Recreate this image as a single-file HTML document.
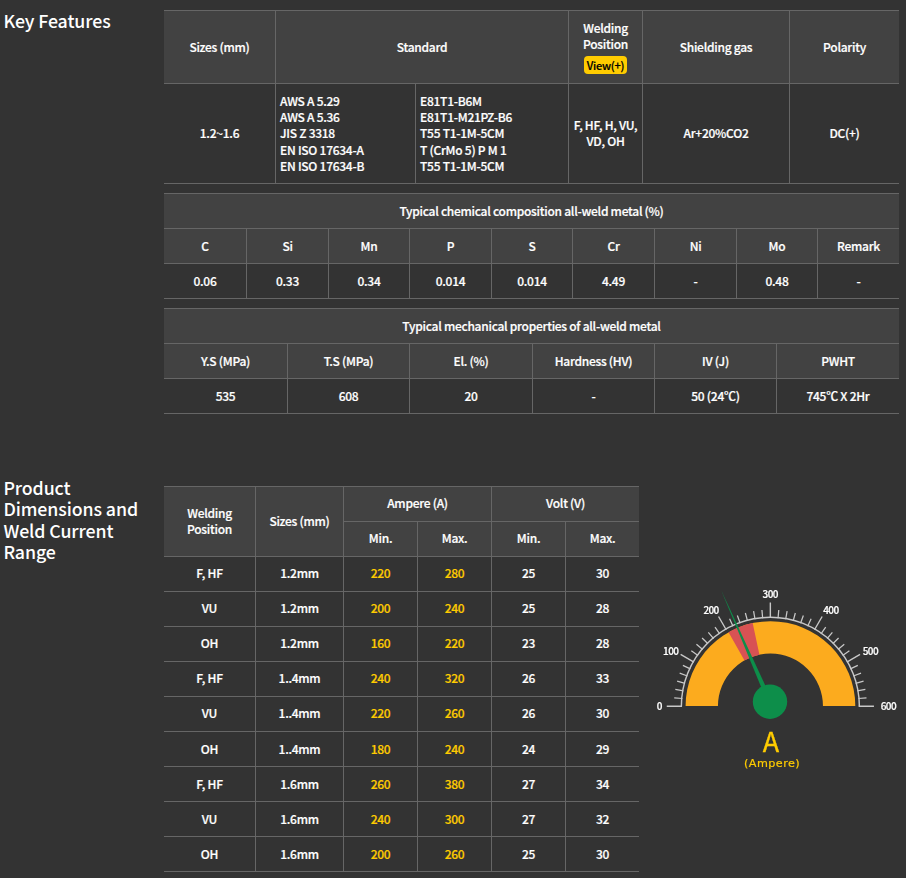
<!DOCTYPE html>
<html lang="en">
<head>
<meta charset="utf-8">
<title>Key Features</title>
<style>
*{box-sizing:border-box;margin:0;padding:0}
html,body{width:906px;height:878px;background:#333;overflow:hidden}
body{position:relative;font-family:"Noto Sans CJK KR","Liberation Sans",sans-serif;color:#fff;font-size:12px;font-weight:500;letter-spacing:-0.27px;line-height:16px;-webkit-text-stroke:0.2px}
h2{position:absolute;left:3.4px;font-size:17.76px;font-weight:500;line-height:21.31px;letter-spacing:-0.1px;width:150px;-webkit-text-stroke:0}
table{position:absolute;left:164px;border-collapse:separate;border-spacing:0;table-layout:fixed;border-top:1px solid #666}
th,td{border-right:1px solid #666;border-bottom:1px solid #666;text-align:center;vertical-align:middle;font-weight:500;padding:0;overflow:hidden}
th{background:#424242}
tr>*:last-child{border-right:none}
#t1{top:10px;width:735px}
#t1 th{height:73px}
#t1 td{height:100px;padding-bottom:2px}
#t1 td.l{text-align:left;padding-left:4px;padding-bottom:0;line-height:16.2px}
.btn{display:block;width:43px;height:18px;margin:4px auto 0;background:#fc0;color:#000;border-radius:4px;font-size:11px;line-height:19px;letter-spacing:-0.25px}
#t2{top:193px;width:735px}
#t3{top:308px;width:735px}
#t2 th,#t2 td,#t3 th,#t3 td,#t4 th,#t4 td{height:35px}
#t4{top:486px;width:475px}
#t4 .y{color:#fc0}
#t4 th,#t4 td{padding-bottom:2px}
#t4 tr:nth-child(n+8) td{padding-bottom:0}
</style>
</head>
<body>
<h2 style="top:10px">Key Features</h2>
<table id="t1">
<colgroup><col style="width:112px"><col style="width:140px"><col style="width:153px"><col style="width:74px"><col style="width:147px"><col style="width:109px"></colgroup>
<tr><th>Sizes (mm)</th><th colspan="2">Standard</th><th>Welding<br>Position<span class="btn">View(+)</span></th><th>Shielding gas</th><th>Polarity</th></tr>
<tr><td>1.2~1.6</td><td class="l">AWS A 5.29<br>AWS A 5.36<br>JIS Z 3318<br>EN ISO 17634-A<br>EN ISO 17634-B</td><td class="l">E81T1-B6M<br>E81T1-M21PZ-B6<br>T55 T1-1M-5CM<br>T (CrMo 5) P M 1<br>T55 T1-1M-5CM</td><td>F, HF, H, VU,<br>VD, OH</td><td>Ar+20%CO2</td><td>DC(+)</td></tr>
</table>

<table id="t2">
<colgroup><col style="width:83px"><col style="width:82px"><col style="width:81px"><col style="width:82px"><col style="width:81px"><col style="width:82px"><col style="width:82px"><col style="width:81px"><col style="width:81px"></colgroup>
<tr><th colspan="9">Typical chemical composition all-weld metal (%)</th></tr>
<tr><th>C</th><th>Si</th><th>Mn</th><th>P</th><th>S</th><th>Cr</th><th>Ni</th><th>Mo</th><th>Remark</th></tr>
<tr><td>0.06</td><td>0.33</td><td>0.34</td><td>0.014</td><td>0.014</td><td>4.49</td><td>-</td><td>0.48</td><td>-</td></tr>
</table>

<table id="t3">
<colgroup><col style="width:124px"><col style="width:122px"><col style="width:123px"><col style="width:122px"><col style="width:122px"><col style="width:122px"></colgroup>
<tr><th colspan="6">Typical mechanical properties of all-weld metal</th></tr>
<tr><th>Y.S (MPa)</th><th>T.S (MPa)</th><th>El. (%)</th><th>Hardness (HV)</th><th>IV (J)</th><th>PWHT</th></tr>
<tr><td>535</td><td>608</td><td>20</td><td>-</td><td>50 (24℃)</td><td>745℃ X 2Hr</td></tr>
</table>

<h2 style="top:477px">Product Dimensions and Weld Current Range</h2>
<table id="t4">
<colgroup><col style="width:92px"><col style="width:88px"><col style="width:74px"><col style="width:74px"><col style="width:74px"><col style="width:73px"></colgroup>
<tr><th rowspan="2">Welding<br>Position</th><th rowspan="2">Sizes (mm)</th><th colspan="2">Ampere (A)</th><th colspan="2">Volt (V)</th></tr>
<tr><th>Min.</th><th>Max.</th><th>Min.</th><th>Max.</th></tr>
<tr><td>F, HF</td><td>1.2mm</td><td class="y">220</td><td class="y">280</td><td>25</td><td>30</td></tr>
<tr><td>VU</td><td>1.2mm</td><td class="y">200</td><td class="y">240</td><td>25</td><td>28</td></tr>
<tr><td>OH</td><td>1.2mm</td><td class="y">160</td><td class="y">220</td><td>23</td><td>28</td></tr>
<tr><td>F, HF</td><td>1..4mm</td><td class="y">240</td><td class="y">320</td><td>26</td><td>33</td></tr>
<tr><td>VU</td><td>1..4mm</td><td class="y">220</td><td class="y">260</td><td>26</td><td>30</td></tr>
<tr><td>OH</td><td>1..4mm</td><td class="y">180</td><td class="y">240</td><td>24</td><td>29</td></tr>
<tr><td>F, HF</td><td>1.6mm</td><td class="y">260</td><td class="y">380</td><td>27</td><td>34</td></tr>
<tr><td>VU</td><td>1.6mm</td><td class="y">240</td><td class="y">300</td><td>27</td><td>32</td></tr>
<tr><td>OH</td><td>1.6mm</td><td class="y">200</td><td class="y">260</td><td>25</td><td>30</td></tr>
</table>

<svg id="gauge" style="position:absolute;left:640px;top:570px;will-change:transform" width="266" height="220" viewBox="640 570 266 220">
<path d="M685.60 706.05A84.85 84.85 0 0 1 855.30 706.05L822.95 706.05A52.50 52.50 0 0 0 717.95 706.05Z" fill="#fcab1e"/>
<path d="M728.54 632.27A84.85 84.85 0 0 1 752.66 623.09L759.45 654.72A52.50 52.50 0 0 0 744.52 660.40Z" fill="#d85254"/>
<path d="M681.35 706.20A89.00 89.00 0 0 1 859.35 706.20" fill="none" stroke="#c8c8c8" stroke-width="1.45"/>
<path d="M682.05 706.20L666.75 706.20M693.88 662.05L680.63 654.40M726.20 629.73L718.55 616.48M770.35 617.90L770.35 602.60M814.50 629.73L822.15 616.48M846.82 662.05L860.07 654.40M858.65 706.20L873.95 706.20" stroke="#c8c8c8" stroke-width="1.4" fill="none"/>
<path d="M682.39 698.50L674.22 697.79M683.39 690.87L675.32 689.44M685.06 683.35L677.14 681.22M687.38 676.00L679.67 673.20M690.32 668.88L682.89 665.42M698.02 655.55L691.30 650.85M702.71 649.44L696.43 644.17M707.91 643.76L702.11 637.96M713.59 638.56L708.32 632.28M719.70 633.87L715.00 627.15M733.03 626.17L729.57 618.74M740.15 623.23L737.35 615.52M747.50 620.91L745.37 612.99M755.02 619.24L753.59 611.17M762.65 618.24L761.94 610.07M778.05 618.24L778.76 610.07M785.68 619.24L787.11 611.17M793.20 620.91L795.33 612.99M800.55 623.23L803.35 615.52M807.67 626.17L811.13 618.74M821.00 633.87L825.70 627.15M827.11 638.56L832.38 632.28M832.79 643.76L838.59 637.96M837.99 649.44L844.27 644.17M842.68 655.55L849.40 650.85M850.38 668.88L857.81 665.42M853.32 676.00L861.03 673.20M855.64 683.35L863.56 681.22M857.31 690.87L865.38 689.44M858.31 698.50L866.48 697.79" stroke="#c8c8c8" stroke-width="1.25" fill="none"/>
<g font-size="10" fill="#fff" text-anchor="middle" letter-spacing="-0.65" font-weight="500" stroke="#fff" stroke-width="0.2"><text x="659.2" y="710.0">0</text><text x="670.7" y="654.5">100</text><text x="711.1" y="614.0">200</text><text x="770.2" y="598.1">300</text><text x="830.9" y="613.8">400</text><text x="870.4" y="654.6">500</text><text x="888.4" y="710.0">600</text></g>
<path d="M772.38 700.66L721.20 590.30L767.62 702.74Z" fill="#0d8e4a"/>
<circle cx="770.0" cy="701.7" r="17.2" fill="#0d8e4a"/>
<text x="771" y="751.5" font-size="27" fill="#fc0" text-anchor="middle" font-weight="400" letter-spacing="0" stroke="#fc0" stroke-width="0.3">A</text>
<text x="772.1" y="766.6" font-size="11.2" fill="#fc0" text-anchor="middle" font-weight="400" letter-spacing="0.45" stroke="#fc0" stroke-width="0.2" font-family="'DejaVu Sans','Liberation Sans',sans-serif">(Ampere)</text>
</svg>
</body>
</html>
